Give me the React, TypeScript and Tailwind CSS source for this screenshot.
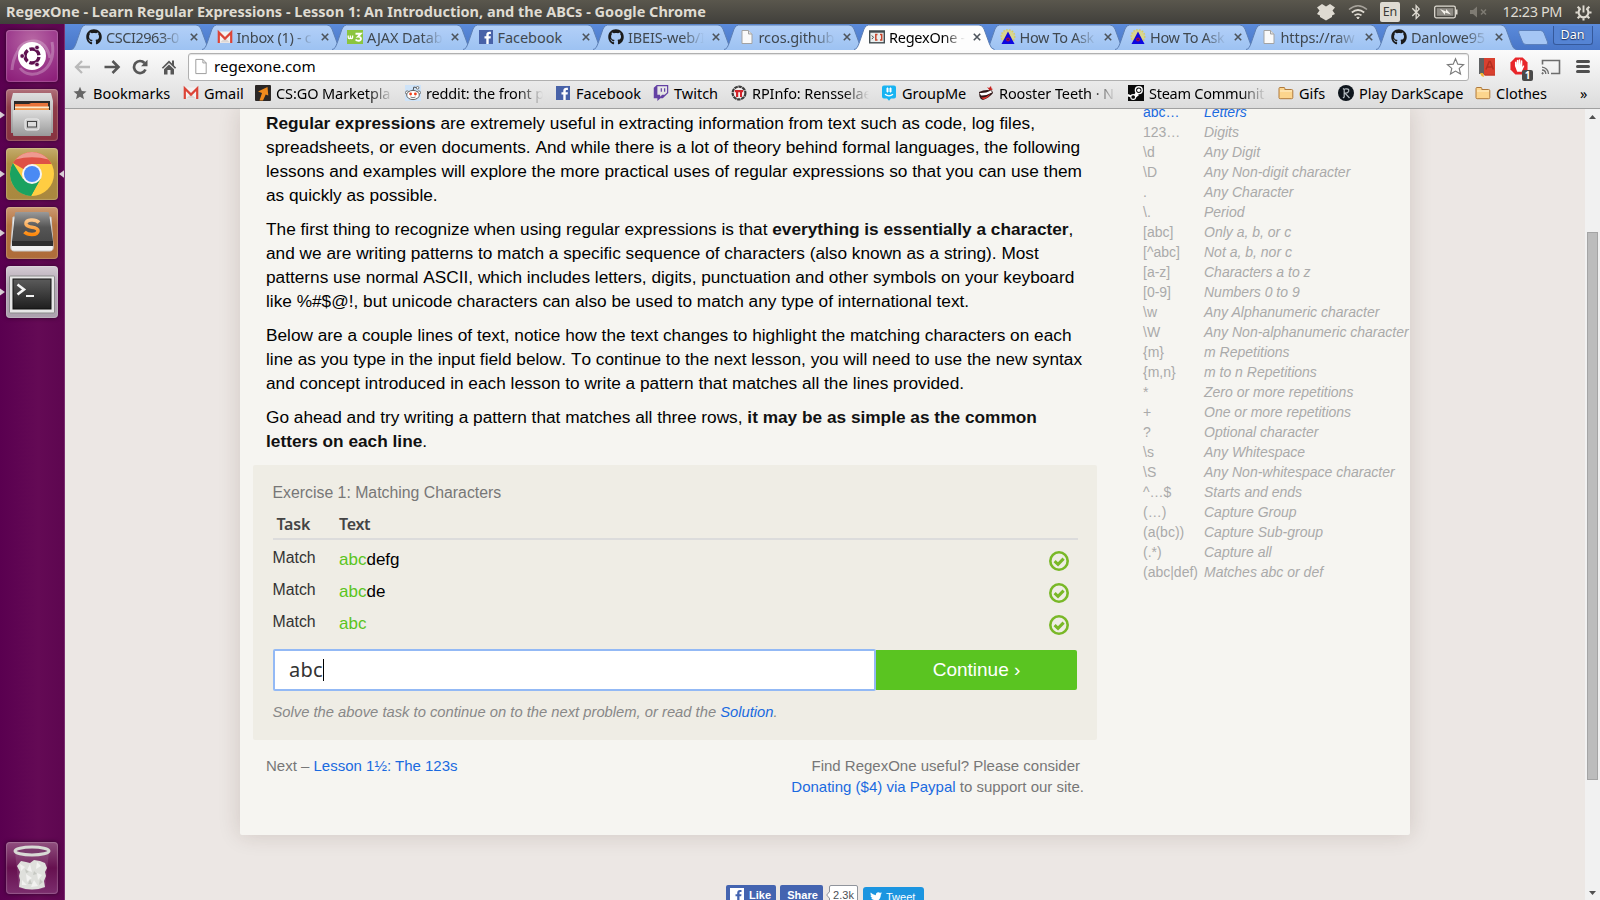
import type { ReactNode } from "react";
import {
  FaGithub,
  FaTwitch,
  FaTwitter,
  FaBluetoothB,
} from "react-icons/fa";

const UI = "font-['Noto_Sans',sans-serif]";

/* ---------- small icons ---------- */

const GithubIcon = () => <FaGithub className="size-4 text-[#1b1b1b]" />;

const GmailIcon = () => (
  <svg viewBox="0 0 16 16" className="size-4">
    <rect x="1" y="2.5" width="14" height="11.5" fill="#f4f1f0" />
    <path d="M3 13.5 L8 9 L13 13.5Z" fill="#dcd6d4" />
    <path d="M1.8 14V3.4L8 9.6L14.2 3.4V14" fill="none" stroke="#dc4437" strokeWidth="2.2" />
  </svg>
);

const W3Icon = () => (
  <svg viewBox="0 0 16 16" className="size-4">
    <rect y="1" width="16" height="14" fill="#8bc53f" />
    <path d="M1.200 6.500v1.800q0 1.200 1.100 1.200t1.100-1.200V6.500v1.800q0 1.200 1.100 1.200t1.100-1.200V6.500" fill="none" stroke="#fff" strokeWidth="1.300" />
    <path d="M8.500 4.800h5.200L11 7.600c3.800-.2 3.800 4.200.6 4.200q-2 0-3-1.300" fill="none" stroke="#fff" strokeWidth="1.900" />
  </svg>
);

const FacebookIcon = () => (
  <svg viewBox="0 0 16 16" className="size-4">
    <rect x="1" y="1" width="14" height="14" fill="#4862a8" />
    <path d="M8.300 15V9.600H6.500V7.300h1.800V5.800c0-2 1.200-3 3-3h1.600v2.200h-1.100c-.9 0-1.100.4-1.100 1.100v1.200h2.200l-.3 2.300h-1.900V15z" fill="#fff" />
  </svg>
);

const PageIcon = () => (
  <svg viewBox="0 0 16 16" className="size-4">
    <path d="M3 1.500h6.500L13 5v9.500H3z" fill="#fafafa" stroke="#a3a3a3" />
    <path d="M9.500 1.500V5H13" fill="#e4e4e4" stroke="#a3a3a3" />
  </svg>
);

const RegexIcon = () => (
  <svg viewBox="0 0 16 16" className="size-4">
    <rect x=".7" y="2.200" width="14.600" height="11.600" fill="#e9eeee" stroke="#424c50" strokeWidth="1.400" />
    <rect x="0" y="1.500" width="16" height="2.200" fill="#424c50" />
    <path d="M2.800 6.500l1.700 1.800-1.700 1.800" fill="none" stroke="#4a4a4a" strokeWidth="1" />
    <path d="M8.500 5.500H6.800v5.500h1.700M11 5.500h1.700v5.500H11" fill="none" stroke="#c9462c" strokeWidth="1.500" />
  </svg>
);

const TriangleIcon = () => (
  <svg viewBox="0 0 16 16" className="size-4">
    <circle cx="8" cy="7.500" r="6.800" fill="#d9d68e" stroke="#d2cc6a" strokeWidth="1.500" strokeDasharray="1.500 1.500" />
    <path d="M8 2.500L14.500 15h-13z" fill="#0d07e0" />
    <circle cx="8" cy="10.500" r="2" fill="#a01050" />
    <circle cx="8" cy="10.500" r=".8" fill="#1a1080" />
  </svg>
);

const StarIcon = () => (
  <svg viewBox="0 0 16 16" className="size-4">
    <path d="M8 1.800l1.800 4.300 4.700.4-3.600 3.100 1.100 4.600L8 11.700l-4 2.500 1.100-4.600L1.500 6.500l4.700-.4z" fill="#666" />
  </svg>
);

const CsgoIcon = () => (
  <svg viewBox="0 0 16 16" className="size-4">
    <rect width="16" height="16" rx="1" fill="#2b2726" />
    <path d="M3 6.500L12.500 2l.8 8.500-2.600-1L8 15.500H4.500L7 8z" fill="#f08a1d" />
  </svg>
);

const RedditIcon = () => (
  <svg viewBox="0 0 16 16" className="size-4">
    <rect width="16" height="16" fill="#cee3f8" />
    <path d="M8 6l.8-4 3.200.7" fill="none" stroke="#444" strokeWidth=".9" />
    <circle cx="12.600" cy="2.800" r="1.300" fill="#fff" stroke="#555" strokeWidth=".8" />
    <circle cx="2.200" cy="7.600" r="1.700" fill="#fff" stroke="#555" strokeWidth=".8" />
    <circle cx="13.800" cy="7.600" r="1.700" fill="#fff" stroke="#555" strokeWidth=".8" />
    <ellipse cx="8" cy="10" rx="6.300" ry="4.600" fill="#fff" stroke="#555" strokeWidth=".9" />
    <circle cx="5.600" cy="9" r="1.400" fill="#f0401c" />
    <circle cx="10.400" cy="9" r="1.400" fill="#f0401c" />
    <path d="M5.500 12q2.500 1.500 5 0" fill="none" stroke="#555" strokeWidth=".8" />
  </svg>
);

const RpiIcon = () => (
  <svg viewBox="0 0 16 16" className="size-4">
    <circle cx="8" cy="8" r="6.400" fill="#f3efef" stroke="#3b3b3b" strokeWidth="2.200" strokeDasharray="3.500 .6" />
    <path d="M3.800 5h8.400v2.300H11V12H9V7.300H7.200V12H5V7.300H3.800z" fill="#d2232a" />
  </svg>
);

const GroupMeIcon = () => (
  <svg viewBox="0 0 16 16" className="size-4">
    <path d="M3 .5h10a2 2 0 012 2v9a2 2 0 01-2 2h-3L8 15.700 6 13.500H3a2 2 0 01-2-2v-9a2 2 0 012-2z" fill="#18b4f2" />
    <path d="M6.500 2.500v5M9.500 2.500v5M5 4h6M5 6h6" stroke="#fff" strokeWidth="1" />
    <path d="M4 9.200q4 3.300 8 0" fill="none" stroke="#fff" strokeWidth="1.300" />
  </svg>
);

const RoosterIcon = () => (
  <svg viewBox="0 0 16 16" className="size-4">
    <path d="M9 2l2 1 2-2 .5 2.500L15 4l-3 2z" fill="#c6211e" />
    <path d="M1 7q6-3 13-1.500L15 8q-4 5-10 7-3-1-3.500-3.500z" fill="#2e1414" />
    <path d="M1.500 8q6 .5 11.500-2.500l1 2Q8 11 3 10.500z" fill="#fff" />
    <path d="M3 12.500q5 .5 9-3.500-.5 3-6.500 5.500z" fill="#e2332e" />
  </svg>
);

const SteamIcon = () => (
  <svg viewBox="0 0 16 16" className="size-4">
    <rect width="16" height="16" fill="#0b0b0b" />
    <circle cx="10.800" cy="5.200" r="3.400" fill="none" stroke="#fff" strokeWidth="1.400" />
    <circle cx="10.800" cy="5.200" r="1.700" fill="#fff" />
    <path d="M0 9l5 2 3-4 3 3-4 3.500L0 11.500z" fill="#fff" />
    <circle cx="5.200" cy="12" r="2.400" fill="#0b0b0b" stroke="#fff" strokeWidth="1.100" />
  </svg>
);

const FolderIcon = () => (
  <svg viewBox="0 0 16 16" className="size-4">
    <path d="M1 3.500q0-1 1-1h4q.8 0 .8.800V4.500H13.500q1.300 0 1.300 1.200v7q0 1-1.200 1H2.200q-1.200 0-1.200-1z" fill="#fcd58d" stroke="#b07a3c" />
    <path d="M2 6h12" stroke="#fff0cc" />
  </svg>
);

const DarkScapeIcon = () => (
  <svg viewBox="0 0 16 16" className="size-4">
    <circle cx="8" cy="8" r="8" fill="#0e151c" />
    <path d="M5 3.500l1.200 1V12L5 13M6.500 4q5-.8 4.200 2.200Q10 8.300 7 8.200L11.500 13" fill="none" stroke="#b8bfc4" strokeWidth="1.200" />
  </svg>
);

/* ---------- tabs ---------- */

type Tab = { icon: ReactNode; label: string; tracking: string; active?: boolean };

const TABS: Tab[] = [
  { icon: <GithubIcon />, label: "CSCI2963-0", tracking: "tracking-[-.45px]" },
  { icon: <GmailIcon />, label: "Inbox (1) - c", tracking: "tracking-[-.3px]" },
  { icon: <W3Icon />, label: "AJAX Datab", tracking: "tracking-[-.1px]" },
  { icon: <FacebookIcon />, label: "Facebook", tracking: "tracking-[-.05px]" },
  { icon: <GithubIcon />, label: "IBEIS-web/I", tracking: "tracking-[-.15px]" },
  { icon: <PageIcon />, label: "rcos.github", tracking: "tracking-[-.1px]" },
  { icon: <RegexIcon />, label: "RegexOne -", tracking: "tracking-[-.25px]", active: true },
  { icon: <TriangleIcon />, label: "How To Ask", tracking: "tracking-[-.35px]" },
  { icon: <TriangleIcon />, label: "How To Ask", tracking: "tracking-[-.35px]" },
  { icon: <PageIcon />, label: "https://raw", tracking: "tracking-[-.1px]" },
  { icon: <GithubIcon />, label: "Danlowe95", tracking: "tracking-[-.25px]" },
];

function TabItem({ tab }: { tab: Tab }) {
  return (
    <div className={`relative flex h-[26px] w-[130.500px] shrink-0 items-center pb-px pl-[13px] ${tab.active ? "z-10" : ""}`}>
      <svg viewBox="0 0 146 26" className="absolute -left-[3px] top-0 h-[26px] w-[146px] overflow-visible">
        <path
          d="M1 26C4 25 4.500 23 6 19.500L11 5Q12.500 1 15.500 1H126Q129.500 1 131 5L136.500 20Q138 25 141.500 26Z"
          fill={tab.active ? "#fdfdfd" : "url(#tabfill)"}
        />
        <path
          d="M1 25.500C4 25 4.500 23 6 19.500L11 5Q12.500 1 15.500 1H126Q129.500 1 131 5L136.500 20Q138 25 141.500 25.500"
          fill="none"
          stroke="#5c7fb5"
          strokeWidth="1"
        />
      </svg>
      <span className="relative flex w-4 shrink-0">{tab.icon}</span>
      <span
        className={`relative ml-1 w-[76px] overflow-hidden whitespace-nowrap text-[14.500px] leading-[22px] ${tab.label === "Facebook" ? "" : "[mask-image:linear-gradient(to_right,#000_72%,transparent_100%)]"} ${tab.tracking} ${tab.active ? "text-black" : "text-[#40484f]"}`}
      >
        {tab.label}
      </span>
      <svg viewBox="0 0 8 8" className="relative ml-[8px] mt-px size-2 shrink-0">
        <path d="M.8.8l6.400 6.400M7.200.8L.8 7.200" stroke="#4d545c" strokeWidth="1.600" />
      </svg>
    </div>
  );
}

/* ---------- bookmarks ---------- */

const BOOKMARKS: { icon: ReactNode; label: string; w: string; fade?: boolean }[] = [
  { icon: <StarIcon />, label: "Bookmarks", w: "w-[111px]" },
  { icon: <GmailIcon />, label: "Gmail", w: "w-[72px]" },
  { icon: <CsgoIcon />, label: "CS:GO Marketpla", w: "w-[150px] tracking-[-.1px]", fade: true },
  { icon: <RedditIcon />, label: "reddit: the front p", w: "w-[150px] tracking-[-.15px]", fade: true },
  { icon: <FacebookIcon />, label: "Facebook", w: "w-[98px]" },
  { icon: <FaTwitch className="size-4 text-[#6441a4]" />, label: "Twitch", w: "w-[78px]" },
  { icon: <RpiIcon />, label: "RPInfo: Rensselae", w: "w-[150px] tracking-[-.1px]", fade: true },
  { icon: <GroupMeIcon />, label: "GroupMe", w: "w-[97px]" },
  { icon: <RoosterIcon />, label: "Rooster Teeth · N", w: "w-[150px] tracking-[-.1px]", fade: true },
  { icon: <SteamIcon />, label: "Steam Communit", w: "w-[150px] tracking-[-.25px]", fade: true },
  { icon: <FolderIcon />, label: "Gifs", w: "w-[60px]" },
  { icon: <DarkScapeIcon />, label: "Play DarkScape", w: "w-[137px]" },
  { icon: <FolderIcon />, label: "Clothes", w: "w-[100px]" },
];

/* ---------- launcher ---------- */

function Tile({ bg, left, right, children }: { bg: string; left?: boolean; right?: boolean; children: ReactNode }) {
  return (
    <div className="flex h-[52px] w-[65px] shrink-0 items-center">
      <svg viewBox="0 0 6 10" className="h-[10px] w-[6px] shrink-0">
        {left && <path d="M0 1.500L5 5 0 8.500z" fill="#d9cfd6" />}
      </svg>
      <div className={`size-[52px] shrink-0 overflow-hidden rounded-[4px] shadow-[0_0_4px_rgba(0,0,0,.5),inset_0_0_1px_1px_rgba(255,255,255,.2)] ${bg}`}>
        <svg viewBox="0 0 52 52" className="size-full">
          {children}
        </svg>
      </div>
      <svg viewBox="0 0 7 10" className="h-[10px] w-[7px] shrink-0">
        {right && <path d="M6 1.200L1 5l5 3.800z" fill="#d9cfd6" />}
      </svg>
    </div>
  );
}

function Launcher() {
  return (
    <aside className="flex w-[65px] shrink-0 flex-col justify-between border-r border-[#7b2f70] bg-[linear-gradient(to_right,#5a0050,#640a55_60%,#5e0650)] pb-[6px] pt-[6px]">
      <div className="flex flex-col gap-[7px]">
        <Tile bg="bg-[radial-gradient(circle_at_50%_20%,#b868a4,#a04090_45%,#8a1a76)]">
          <path d="M6 40C8 10 35 2 42 22M46 12C52 42 24 52 14 38M12 20C18 8 40 6 44 28" fill="none" stroke="#fff" strokeOpacity=".25" strokeWidth="3" />
          <circle cx="26" cy="26" r="14" fill="#fff" />
          <circle cx="26" cy="26" r="7" fill="none" stroke="#5e1050" strokeWidth="3.400" strokeDasharray="12.600 2.060" strokeDashoffset="-1" />
          <circle cx="16.200" cy="26" r="2.300" fill="#5e1050" stroke="#fff" strokeWidth=".7" />
          <circle cx="31" cy="17.500" r="2.300" fill="#5e1050" stroke="#fff" strokeWidth=".7" />
          <circle cx="31" cy="34.500" r="2.300" fill="#5e1050" stroke="#fff" strokeWidth=".7" />
        </Tile>
        <Tile left bg="bg-[linear-gradient(#b0707a,#8e3c48_35%,#87323f)]">
          <path d="M7 4h38l2 8v32H5V12z" fill="url(#steel)" />
          <rect x="8" y="12" width="36" height="10" fill="#2d2a29" />
          <path d="M9 15h14l2 -1h17v8H9z" fill="#e8733a" />
          <path d="M9 17.500h34v2H9z" fill="#fbe9c8" />
          <path d="M9 19.500h34V22H9z" fill="#f2994a" />
          <rect x="7" y="21" width="38" height="26" rx="1" fill="url(#steel)" />
          <rect x="19" y="30" width="14" height="11" rx="2" fill="#c7c7c7" stroke="#efefef" />
          <rect x="21.500" y="32.500" width="9" height="5.500" fill="#dcdcdc" stroke="#444" />
        </Tile>
        <Tile left right bg="bg-[linear-gradient(#c4ad6c,#ad8c40_30%,#a9883f)]">
          <circle cx="26" cy="26" r="22" fill="#ffcd42" />
          <path d="M26 26L6.950 15A22 22 0 0 1 45.050 15L45.400 16H26z" fill="#de5145" />
          <path d="M9.500 11.500A22 22 0 0 1 42.500 11.500Q26 7 9.500 11.500z" fill="#ee9a90" />
          <path d="M6.950 15A22 22 0 0 0 25 48L34 31.500 17 31z" fill="#1aa260" />
          <path d="M25 48L34.500 31 26 26 17 31z" fill="#1aa260" />
          <circle cx="26" cy="26" r="10" fill="#f4f4f4" />
          <circle cx="26" cy="26" r="8" fill="#4a8af4" />
        </Tile>
        <Tile left bg="bg-[linear-gradient(#cc9a72,#b4723f_35%,#ae6c3a)]">
          <path d="M7 10L5 38q-1 6 3 6h36q4 0 3-6l-2-28z" fill="#f1f1f1" stroke="#c9c9c9" />
          <path d="M9 6q0-1 2-1h30q2 0 2 1l4 28v5H6v-5z" fill="url(#key)" />
          <path d="M6 34h41v5H6z" fill="#2e2e2e" />
          <path d="M33 15.500Q30 12.500 25 13Q19.500 13.500 20 17Q20.500 19.500 26 20.200Q32 21 32 24Q31.500 27.500 26 27.500Q21 27.500 18.500 25" fill="none" stroke="url(#flame)" strokeWidth="3.600" />
        </Tile>
        <Tile left bg="bg-[linear-gradient(#d5ccd4,#b3a8b4_35%,#aca1ae)]">
          <rect x="3.500" y="10" width="45" height="37" rx="1" fill="#e6e6e6" stroke="#8b8b8b" />
          <rect x="7" y="13" width="38" height="30" fill="url(#term)" stroke="#111" />
          <path d="M11.500 18.500L18 23.500l-6.500 5" fill="none" stroke="#f3f3f3" strokeWidth="2.600" />
          <path d="M20 30h8" stroke="#f3f3f3" strokeWidth="2" />
        </Tile>
      </div>
      <Tile bg="bg-[linear-gradient(#90507f,#66104f_50%,#7c2e6e)]">
        <path d="M9 10L13 46q13 4 26 0L43 10z" fill="#fff" fillOpacity=".1" />
        <path d="M11 24l4-5 5 1 4 1 4-3 6 1 5 2 2 5-2 4 1 4-2 5 1 6q-13 5-26 0l1-7-1-4 1-4z" fill="#dfe0dc" />
        <path d="M14 22l5 3-4 4zM24 22l-3 6 5 2zM31 20l-1 7 5-3zM20 32l6 4-5 4zM31 31l5 2-4 5zM16 38l5 5h-5zM28 38l4 6-7 1z" fill="#f2f2f0" />
        <path d="M19 27l4 3-3 1zM28 29l3 3-4 1zM24 37l2 5-4 0zM34 37l3 3-4 3z" fill="#c6c8c2" />
        <ellipse cx="26" cy="9" rx="17" ry="4" fill="#7a3a6c" stroke="#d8dad5" strokeWidth="3" />
      </Tile>
    </aside>
  );
}

/* ---------- page data ---------- */

const NOTES: [string, string][] = [
  ["abc…", "Letters"],
  ["123…", "Digits"],
  ["\\d", "Any Digit"],
  ["\\D", "Any Non-digit character"],
  [".", "Any Character"],
  ["\\.", "Period"],
  ["[abc]", "Only a, b, or c"],
  ["[^abc]", "Not a, b, nor c"],
  ["[a-z]", "Characters a to z"],
  ["[0-9]", "Numbers 0 to 9"],
  ["\\w", "Any Alphanumeric character"],
  ["\\W", "Any Non-alphanumeric character"],
  ["{m}", "m Repetitions"],
  ["{m,n}", "m to n Repetitions"],
  ["*", "Zero or more repetitions"],
  ["+", "One or more repetitions"],
  ["?", "Optional character"],
  ["\\s", "Any Whitespace"],
  ["\\S", "Any Non-whitespace character"],
  ["^…$", "Starts and ends"],
  ["(…)", "Capture Group"],
  ["(a(bc))", "Capture Sub-group"],
  ["(.*)", "Capture all"],
  ["(abc|def)", "Matches abc or def"],
];

const ROWS = ["defg", "de", ""];

const B = ({ children }: { children: ReactNode }) => <strong className="font-bold text-[#111]">{children}</strong>;

const CheckIcon = () => (
  <svg viewBox="0 0 20 20" className="size-5">
    <circle cx="10" cy="10" r="8.700" fill="none" stroke="#79b827" strokeWidth="2.600" />
    <path d="M5.600 10.200l3.400 3.200 5.600-5.800" fill="none" stroke="#79b827" strokeWidth="3" />
  </svg>
);

function Exercise() {
  return (
    <section className="-mx-[13px] mt-[12px] h-[275px] rounded-[2px] bg-[#efede5] pl-[19.500px] pr-5 pt-[18px]">
      <h3 className="text-[15.840px] leading-5 text-[#777]">Exercise 1: Matching Characters</h3>
      <div className={`mt-[9px] flex h-[28px] w-[805px] border-b-2 border-[#dcdcdc] text-[16px] font-semibold leading-6 text-[#444] ${UI}`}>
        <span className="w-[66.500px] pl-1 tracking-[-.2px]">Task</span>
        <span className="tracking-[-.3px]">Text</span>
      </div>
      <div className="mt-[5px]">
        {ROWS.map((rest) => (
          <div key={rest} className="flex h-8 w-[805px] items-start">
            <span className="w-[66.500px] pt-[3px] text-[15.840px] leading-5 text-[#333]">Match</span>
            <span className="flex-1 pt-[4px] text-[17px] leading-[22px] text-black">
              <span className="text-[#5ac421]">abc</span>
              {rest}
            </span>
            <span className="mr-[8.500px] pt-[6px]">
              <CheckIcon />
            </span>
          </div>
        ))}
      </div>
      <div className="ml-[.5px] mt-[8px] flex h-[42px] items-center">
        <div className="flex h-[42px] w-[603px] shrink-0 items-center rounded-[2px] border-2 border-[#93b9f5] bg-white pl-[14px]">
          <span className={`text-[20px] leading-6 tracking-[.3px] text-[#333] ${UI}`}>abc</span>
          <span className="h-[22px] w-px bg-black" />
        </div>
        <div className="flex h-10 w-[201px] shrink-0 items-center justify-center rounded-r-[2px] bg-[#5ac421] pt-px text-[19px] text-white">
          Continue ›
        </div>
      </div>
      <p className="mt-[11px] text-[14.760px] italic leading-5 text-[#888]">
        Solve the above task to continue on to the next problem, or read the <a className="text-[#1a6ae0]">Solution</a>.
      </p>
    </section>
  );
}

function PageContent() {
  return (
    <div className="flex min-w-0 flex-1 flex-col overflow-hidden bg-[#ece7e4] font-['Liberation_Sans',Arial,sans-serif]">
      <main className="ml-[175px] flex h-[726px] w-[1170px] shrink-0 rounded-b-[2px] bg-[#f6f5f1] shadow-[0_0_22px_rgba(60,30,20,.16)]">
        <article className="w-[870px] shrink-0 whitespace-nowrap px-[26px] pt-[2px]">
          <div className="text-[17.250px] leading-6 text-black [font-kerning:none]">
            <p>
              <B>Regular expressions</B> are extremely useful in extracting information from text such as code, log files,
              <br />
              spreadsheets, or even documents. And while there is a lot of theory behind formal languages, the following
              <br />
              lessons and examples will explore the more practical uses of regular expressions so that you can use them
              <br />
              as quickly as possible.
            </p>
            <p className="mt-[10px]">
              The first thing to recognize when using regular expressions is that <B>everything is essentially a character</B>,
              <br />
              and we are writing patterns to match a specific sequence of characters (also known as a string). Most
              <br />
              patterns use normal ASCII, which includes letters, digits, punctuation and other symbols on your keyboard
              <br />
              like %#$@!, but unicode characters can also be used to match any type of international text.
            </p>
            <p className="mt-[10px]">
              Below are a couple lines of text, notice how the text changes to highlight the matching characters on each
              <br />
              line as you type in the input field below. To continue to the next lesson, you will need to use the new syntax
              <br />
              and concept introduced in each lesson to write a pattern that matches all the lines provided.
            </p>
            <p className="mt-[10px]">
              Go ahead and try writing a pattern that matches all three rows, <B>it may be as simple as the common</B>
              <br />
              <B>letters on each line</B>.
            </p>
          </div>
          <Exercise />
          <div className="mt-[15px] flex justify-between text-[15px] leading-[21px] text-[#777]">
            <p>
              Next – <a className="text-[#1a6ae0]">Lesson 1½: The 123s</a>
            </p>
            <p className="-mr-[13px] w-[306px] text-right">
              <span className="pr-[17px]">Find RegexOne useful? Please consider</span>
              <br />
              <span className="pr-[13px]">
                <a className="text-[#1a6ae0]">Donating ($4) via Paypal</a> to support our site.
              </span>
            </p>
          </div>
        </article>
        <aside className="-mt-[7px] flex h-[490px] flex-col whitespace-nowrap pl-[33px] text-[14px] leading-5 text-[#aaa] [clip-path:inset(7px_-20px_0_0)]">
          {NOTES.map(([code, desc], i) => (
            <div key={code} className={i === 0 ? "flex text-[#1a6ae0]" : "flex"}>
              <span className="w-[61px] shrink-0">{code}</span>
              <em>{desc}</em>
            </div>
          ))}
        </aside>
      </main>
      <footer className="ml-[661px] mt-[50px] flex items-start">
        <div className="flex h-5 w-[50px] items-center rounded-[2px] bg-[#4464b0] pl-1 text-[11px] font-bold text-white">
          <svg viewBox="0 0 14 14" className="mr-[5px] size-[14px]">
            <rect width="14" height="14" fill="#fff" />
            <path d="M7.200 14V8.300H5.500V6.200h1.700V4.900c0-2 1-3 2.700-3h1.600v2.200h-1c-.8 0-1 .3-1 1v1.100h2l-.3 2.100H9.500V14z" fill="#4464b0" />
          </svg>
          Like
        </div>
        <div className="ml-1 flex h-5 w-[43px] items-center justify-center rounded-[2px] bg-[#4464b0] pl-[2px] text-[11px] font-bold text-white">Share</div>
        <svg viewBox="0 0 4 20" className="relative z-10 ml-[3px] h-5 w-[4px] shrink-0">
          <path d="M4 6L.7 10 4 14" fill="#fff" stroke="#90949c" />
        </svg>
        <div className="-ml-px flex h-5 w-[29px] items-center justify-center rounded-[2px] border border-[#90949c] bg-white text-[11px] text-[#4b4f56]">2.3k</div>
        <div className="ml-[5px] mt-[2px] flex h-5 w-[61px] items-center rounded-[3px] bg-[#1b95e0] pl-[7px] text-[11px] text-white">
          <FaTwitter className="mr-1 size-3" />
          Tweet
        </div>
      </footer>
    </div>
  );
}

function Scrollbar() {
  return (
    <div className="flex w-[15px] shrink-0 flex-col items-center bg-[#f1f1f1]">
      <svg viewBox="0 0 15 14" className="h-[14px] w-[15px] shrink-0">
        <path d="M4 10l3.500-4L11 10z" fill="#505050" />
      </svg>
      <div className="mt-[109px] h-[548px] w-[11px] shrink-0 border border-[#a4a4a4] bg-[#bcbcbc]" />
      <svg viewBox="0 0 15 14" className="mt-auto h-[14px] w-[15px] shrink-0">
        <path d="M4 5l3.500 4L11 5z" fill="#505050" />
      </svg>
    </div>
  );
}

/* ---------- chrome ---------- */

function TitleBar() {
  return (
    <header className={`flex h-6 shrink-0 items-center bg-[linear-gradient(#5a574d,#403f3b)] pl-[6px] text-[#dfdbd2] ${UI}`}>
      <span className="whitespace-nowrap pb-px text-[14.500px] font-bold">
        RegexOne - Learn Regular Expressions - Lesson 1: An Introduction, and the ABCs - Google Chrome
      </span>
      <div className="ml-auto flex h-6 w-[283px] shrink-0 items-center">
        <svg viewBox="0 0 18 18" className="size-[18px] shrink-0">
          <path d="M5 1l4 2.500L13 1l5 3.500-2.500 3L18 11l-3 1.500V14l-6 3.500L3 14v-1.500L0 11l2.500-3.500L0 4.500z" fill="#dfdbd2" />
        </svg>
        <svg viewBox="0 0 20 16" className="ml-[13px] h-4 w-5 shrink-0 fill-none stroke-[#dfdbd2]">
          <path d="M1 5.500q9-7.500 18 0" strokeWidth="1.600" opacity=".6" />
          <path d="M3.800 8.500q6.200-5 12.400 0" strokeWidth="1.700" />
          <path d="M6.500 11.400q3.500-2.700 7 0" strokeWidth="1.700" />
          <path d="M8.800 13.300h2.400L10 15z" fill="#dfdbd2" />
        </svg>
        <span className="ml-[12px] flex h-5 w-5 shrink-0 items-center justify-center rounded-[2px] bg-[#dfdbd2] text-[12.500px] text-[#3c3b37]">En</span>
        <FaBluetoothB className="ml-[8px] h-4 w-4 shrink-0" />
        <svg viewBox="0 0 24 14" className="ml-[10px] h-[14px] w-6 shrink-0">
          <rect x=".7" y="1.200" width="20.600" height="11.600" rx="1.500" fill="none" stroke="#dfdbd2" strokeWidth="1.300" />
          <rect x="2.800" y="3.200" width="16.500" height="7.600" fill="#8f8c85" />
          <path d="M22 4.500h1.500v5H22" fill="#dfdbd2" />
          <path d="M6 4l6 2.500V4l5 5.500-6-2V10z" fill="#f4f1ea" />
        </svg>
        <svg viewBox="0 0 18 12" className="ml-[12px] h-3 w-[18px] shrink-0">
          <path d="M0 4h3l4-3.500v11L3 8H0z" fill="#7e7b73" />
          <path d="M11 3.500l5 5M16 3.500l-5 5" stroke="#7e7b73" strokeWidth="1.500" />
        </svg>
        <span className="ml-[14.500px] w-[64px] shrink-0 whitespace-nowrap pb-px text-[14.500px] tracking-[-.4px]">12:23 PM</span>
        <svg viewBox="0 0 18 18" className="ml-[8px] size-[17px] shrink-0 fill-none stroke-[#dfdbd2]">
          <path d="M6 4.700a5.200 5.200 0 1 0 6 0" strokeWidth="2.200" />
          <path d="M9 1.500v7.500" strokeWidth="2" />
          <path d="M2.800 2.800l2 2M15.200 2.800l-2 2M.5 9h2.500M17.500 9H15M2.800 15.200l2-2M15.200 15.200l-2-2M9 15v2.500" strokeWidth="2.200" />
        </svg>
      </div>
    </header>
  );
}

function TabStrip() {
  return (
    <div className="flex h-[26px] shrink-0 bg-[linear-gradient(#5b8bdb,#4876c8)] pl-[8px]">
      {TABS.map((tab, i) => (
        <TabItem key={i} tab={tab} />
      ))}
      <svg viewBox="0 0 34 26" className="ml-[7px] h-[26px] w-[34px] shrink-0">
        <path d="M4 6.500h20.500q2.500 0 3.500 2.500l3.500 9q1 2.500-1.500 2.500H10q-2.500 0-3.500-2.500L2.800 9q-1-2.500 1.200-2.500z" fill="#a5c6f4" stroke="#5c80bb" />
      </svg>
      <div className="ml-[3px] mt-[2px] flex h-[19px] w-[40px] shrink-0 items-center justify-center rounded-b-[3px] border border-t-0 border-[#35599b] bg-[#5584d4] pt-px text-[12.500px] text-white [text-shadow:0_0_2px_#1c3566,0_1px_1px_#1c3566]">
        Dan
      </div>
    </div>
  );
}

function Toolbar() {
  return (
    <div className="flex h-[33px] shrink-0 items-center pl-[9px]">
      <svg viewBox="0 0 18 16" className="h-4 w-[18px] fill-none stroke-[#b9b9b9]">
        <path d="M16 8H2.500M8 2L2 8l6 6" strokeWidth="2.300" />
      </svg>
      <svg viewBox="0 0 18 16" className="ml-[11px] h-4 w-[18px] fill-none stroke-[#575757]">
        <path d="M1.500 8H15M9.500 2l6 6-6 6" strokeWidth="2.600" />
      </svg>
      <svg viewBox="0 0 16 16" className="ml-[11px] size-4">
        <path d="M13.500 10.500A6 6 0 1 1 12.500 4" fill="none" stroke="#575757" strokeWidth="2.700" />
        <path d="M15.500.8v6.400H9z" fill="#575757" />
      </svg>
      <svg viewBox="0 0 16 16" className="ml-[13px] size-4">
        <path d="M8 1.500L.8 8.700l1.200 1L8 4l6 5.700 1.200-1-2.200-2.200V1.500h-2v3z" fill="#575757" />
        <path d="M3 10.200l5-4.800 5 4.800V15.500H9.500V11h-3v4.500H3z" fill="#575757" />
      </svg>
      <div className="ml-[11px] flex h-[28px] w-[1281px] items-center rounded-[3px] border border-[#b0b0b0] bg-white pl-[4px] pr-[3px] shadow-[inset_0_1px_1px_rgba(0,0,0,.12)]">
        <svg viewBox="0 0 16 18" className="h-[17px] w-4">
          <path d="M2.500 1.500h7.500l3.500 3.700v11.300h-11z" fill="#fff" stroke="#9a9a9a" />
          <path d="M10 1.500v3.700h3.500" fill="none" stroke="#9a9a9a" />
        </svg>
        <span className="ml-[5px] pb-px text-[15.200px] text-black">regexone.com</span>
        <svg viewBox="0 0 20 20" className="ml-auto size-[19px]">
          <path d="M10 1.800l2.400 5.700 6.100.5-4.600 4 1.400 6L10 14.800 4.700 18l1.400-6L1.500 8l6.100-.5z" fill="#fff" stroke="#7a7a7a" strokeWidth="1.200" />
        </svg>
      </div>
      <svg viewBox="0 0 18 20" className="ml-[9px] h-5 w-[18px]">
        <rect x="1" y="1" width="16" height="16" fill="#d8402f" />
        <rect x="1" y="1" width="5" height="16" fill="#5f6163" />
        <path d="M2 17h15v2H5z" fill="#e9e4e0" />
        <path d="M5 17h12v1.800H7z" fill="#c93c2c" />
        <path d="M2 16l3 0 1 4-2.500-1z" fill="#f2b52b" />
        <path d="M8 12.500L11.200 4.500h1L15.400 12.500M9.500 10h4.500" fill="none" stroke="#b22e20" strokeWidth="1.500" />
      </svg>
      <div className="relative ml-[14px] h-[20px] w-[22px]">
        <svg viewBox="0 0 20 20" className="size-[18px]">
          <path d="M6 .5h8L19.500 6v8L14 19.500H6L.5 14V6z" fill="#e8262a" />
          <path d="M5.500 10V5.500q1-1 1.600 0V9l.5-5.500q1-1 1.700 0V9l.4-6q1-1 1.700 0v6l.8-5q1-.8 1.500.3V11l1-1.500q1.500-.5 1 1L13 16.500H8z" fill="#fff" />
        </svg>
        <span className="absolute -bottom-[4px] left-[12px] flex h-[11px] w-[11px] items-center justify-center rounded-[2px] bg-[#4a4a4a] text-[10px] font-bold leading-none text-white">1</span>
      </div>
      <svg viewBox="0 0 20 16" className="ml-[9px] h-4 w-5 fill-none stroke-[#6d6d6d]">
        <path d="M1.500 5.500V1.500h17v13H10" strokeWidth="1.600" />
        <path d="M1 8.200a6.800 6.800 0 0 1 6.500 6.800M1 11a4 4 0 0 1 3.800 4" strokeWidth="1.300" />
        <circle cx="1.600" cy="14.300" r=".7" fill="#6d6d6d" />
      </svg>
      <div className="ml-[15px] flex w-[14px] flex-col gap-[2px] pb-px">
        <i className="h-[3px] rounded-full bg-[#4f4f4f]" />
        <i className="h-[3px] rounded-full bg-[#4f4f4f]" />
        <i className="h-[3px] rounded-full bg-[#4f4f4f]" />
      </div>
    </div>
  );
}

function BookmarkBar() {
  return (
    <div className="flex h-[25px] shrink-0 items-start pl-[7px] text-[14.500px] leading-[22px] text-black">
      {BOOKMARKS.map((b) => (
        <div key={b.label} className={`-mt-px flex h-[22px] shrink-0 items-center pr-[12px] ${b.w}`}>
          <span className="mr-[5px] flex w-4 shrink-0">{b.icon}</span>
          <span
            className={`whitespace-nowrap ${b.fade ? "min-w-0 flex-1 overflow-hidden [mask-image:linear-gradient(to_right,#000_78%,transparent_100%)]" : ""}`}
          >
            {b.label}
          </span>
        </div>
      ))}
      <span className="-mt-px ml-[5px]">»</span>
    </div>
  );
}

export default function App() {
  return (
    <div className="flex h-[900px] w-[1600px] flex-col overflow-hidden">
      <svg className="absolute size-0">
        <defs>
          <linearGradient id="tabfill" x1="0" y1="0" x2="0" y2="1">
            <stop offset="0" stopColor="#b3d0f8" />
            <stop offset="1" stopColor="#9dc2f2" />
          </linearGradient>
          <linearGradient id="steel" x1="0" y1="0" x2="0" y2="1">
            <stop offset="0" stopColor="#dedede" />
            <stop offset="1" stopColor="#999" />
          </linearGradient>
          <linearGradient id="key" x1="0" y1="0" x2="0" y2="1">
            <stop offset="0" stopColor="#9a9a9a" />
            <stop offset=".45" stopColor="#555" />
            <stop offset="1" stopColor="#454545" />
          </linearGradient>
          <linearGradient id="flame" x1="0" y1="0" x2="0" y2="1">
            <stop offset="0" stopColor="#fbc88f" />
            <stop offset="1" stopColor="#ff8a0d" />
          </linearGradient>
          <linearGradient id="term" x1="0" y1="0" x2="0" y2="1">
            <stop offset="0" stopColor="#5b5b5b" />
            <stop offset="1" stopColor="#1e1e1e" />
          </linearGradient>
        </defs>
      </svg>
      <TitleBar />
      <div className="flex min-h-0 flex-1">
        <Launcher />
        <div className="flex min-w-0 flex-1 flex-col">
          <div className={UI}>
            <TabStrip />
            <div className="border-b border-[#a0a0a0] bg-[linear-gradient(#fbfbfb,#dcdcdc)]">
              <Toolbar />
              <BookmarkBar />
            </div>
          </div>
          <div className="flex min-h-0 flex-1">
            <PageContent />
            <Scrollbar />
          </div>
        </div>
      </div>
    </div>
  );
}
